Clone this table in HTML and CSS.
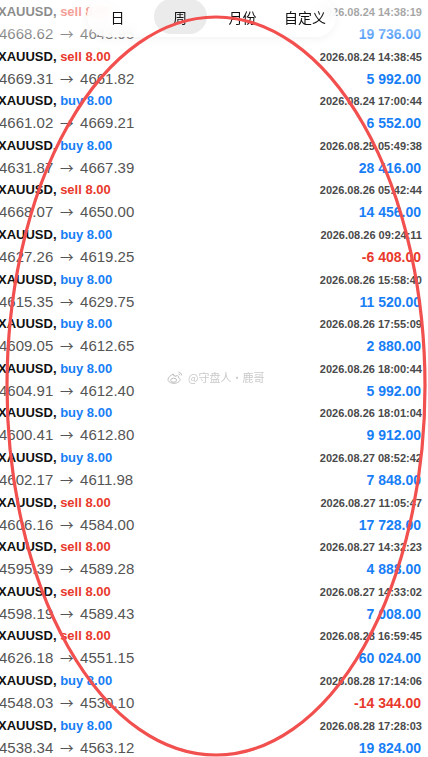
FILE: index.html
```html
<!DOCTYPE html>
<html lang="zh">
<head>
  <meta charset="UTF-8">
  <meta name="viewport" content="width=device-width, initial-scale=1.0">
  <title>交易记录</title>
  <link rel="stylesheet" href="styles.css">
</head>
<body>
  <div class="screen">
    <div class="trades">
      <div class="trade">
        <div class="line"><span class="sym">XAUUSD, <span class="sell">sell 8.00</span></span><span class="time">2026.08.24 14:38:19</span></div>
        <div class="line"><span class="px">4668.62 <i>→</i> 4643.95</span><span class="pnl">19 736.00</span></div>
      </div>
      <div class="trade">
        <div class="line"><span class="sym">XAUUSD, <span class="sell">sell 8.00</span></span><span class="time">2026.08.24 14:38:45</span></div>
        <div class="line"><span class="px">4669.31 <i>→</i> 4661.82</span><span class="pnl">5 992.00</span></div>
      </div>
      <div class="trade">
        <div class="line"><span class="sym">XAUUSD, <span class="buy">buy 8.00</span></span><span class="time">2026.08.24 17:00:44</span></div>
        <div class="line"><span class="px">4661.02 <i>→</i> 4669.21</span><span class="pnl">6 552.00</span></div>
      </div>
      <div class="trade">
        <div class="line"><span class="sym">XAUUSD, <span class="buy">buy 8.00</span></span><span class="time">2026.08.25 05:49:38</span></div>
        <div class="line"><span class="px">4631.87 <i>→</i> 4667.39</span><span class="pnl">28 416.00</span></div>
      </div>
      <div class="trade">
        <div class="line"><span class="sym">XAUUSD, <span class="sell">sell 8.00</span></span><span class="time">2026.08.26 05:42:44</span></div>
        <div class="line"><span class="px">4668.07 <i>→</i> 4650.00</span><span class="pnl">14 456.00</span></div>
      </div>
      <div class="trade">
        <div class="line"><span class="sym">XAUUSD, <span class="buy">buy 8.00</span></span><span class="time">2026.08.26 09:24:11</span></div>
        <div class="line"><span class="px">4627.26 <i>→</i> 4619.25</span><span class="pnl loss">-6 408.00</span></div>
      </div>
      <div class="trade">
        <div class="line"><span class="sym">XAUUSD, <span class="buy">buy 8.00</span></span><span class="time">2026.08.26 15:58:40</span></div>
        <div class="line"><span class="px">4615.35 <i>→</i> 4629.75</span><span class="pnl">11 520.00</span></div>
      </div>
      <div class="trade">
        <div class="line"><span class="sym">XAUUSD, <span class="buy">buy 8.00</span></span><span class="time">2026.08.26 17:55:09</span></div>
        <div class="line"><span class="px">4609.05 <i>→</i> 4612.65</span><span class="pnl">2 880.00</span></div>
      </div>
      <div class="trade">
        <div class="line"><span class="sym">XAUUSD, <span class="buy">buy 8.00</span></span><span class="time">2026.08.26 18:00:44</span></div>
        <div class="line"><span class="px">4604.91 <i>→</i> 4612.40</span><span class="pnl">5 992.00</span></div>
      </div>
      <div class="trade">
        <div class="line"><span class="sym">XAUUSD, <span class="buy">buy 8.00</span></span><span class="time">2026.08.26 18:01:04</span></div>
        <div class="line"><span class="px">4600.41 <i>→</i> 4612.80</span><span class="pnl">9 912.00</span></div>
      </div>
      <div class="trade">
        <div class="line"><span class="sym">XAUUSD, <span class="buy">buy 8.00</span></span><span class="time">2026.08.27 08:52:42</span></div>
        <div class="line"><span class="px">4602.17 <i>→</i> 4611.98</span><span class="pnl">7 848.00</span></div>
      </div>
      <div class="trade">
        <div class="line"><span class="sym">XAUUSD, <span class="sell">sell 8.00</span></span><span class="time">2026.08.27 11:05:47</span></div>
        <div class="line"><span class="px">4606.16 <i>→</i> 4584.00</span><span class="pnl">17 728.00</span></div>
      </div>
      <div class="trade">
        <div class="line"><span class="sym">XAUUSD, <span class="sell">sell 8.00</span></span><span class="time">2026.08.27 14:32:23</span></div>
        <div class="line"><span class="px">4595.39 <i>→</i> 4589.28</span><span class="pnl">4 888.00</span></div>
      </div>
      <div class="trade">
        <div class="line"><span class="sym">XAUUSD, <span class="sell">sell 8.00</span></span><span class="time">2026.08.27 14:33:02</span></div>
        <div class="line"><span class="px">4598.19 <i>→</i> 4589.43</span><span class="pnl">7 008.00</span></div>
      </div>
      <div class="trade">
        <div class="line"><span class="sym">XAUUSD, <span class="sell">sell 8.00</span></span><span class="time">2026.08.28 16:59:45</span></div>
        <div class="line"><span class="px">4626.18 <i>→</i> 4551.15</span><span class="pnl">60 024.00</span></div>
      </div>
      <div class="trade">
        <div class="line"><span class="sym">XAUUSD, <span class="buy">buy 8.00</span></span><span class="time">2026.08.28 17:14:06</span></div>
        <div class="line"><span class="px">4548.03 <i>→</i> 4530.10</span><span class="pnl loss">-14 344.00</span></div>
      </div>
      <div class="trade">
        <div class="line"><span class="sym">XAUUSD, <span class="buy">buy 8.00</span></span><span class="time">2026.08.28 17:28:03</span></div>
        <div class="line"><span class="px">4538.34 <i>→</i> 4563.12</span><span class="pnl">19 824.00</span></div>
      </div>
    </div>

    <div class="fade"></div>

    <div class="tabs">
      <span class="tab">日</span>
      <span class="tab active">周</span>
      <span class="tab">月份</span>
      <span class="tab">自定义</span>
    </div>

    <div class="watermark">
      <svg width="16" height="13" viewBox="0 0 16 13" fill="none" stroke="#bdbdbd" stroke-width="1">
        <path d="M6.5 3.2C3.6 4 1 6.4 1 8.6 1 10.9 4 12.3 7 12.3c3.4 0 6.1-1.8 6.1-3.8 0-1.1-1-1.6-1.8-1.8.5-1.2.1-2-1.1-2-.8 0-1.7.4-2.3.8.3-1-.2-1.4-1.4-.9z"/>
        <ellipse cx="6.6" cy="9.2" rx="3" ry="2"/>
        <path d="M11.5 1.2c1.8 0 3.2 1.4 3.2 3.2M11.6 2.9c.8 0 1.4.6 1.4 1.4"/>
      </svg>
      <span>@守盘人·鹿哥</span>
    </div>

    <svg class="circle" width="428" height="757" viewBox="0 0 428 757">
      <ellipse cx="216" cy="386" rx="209" ry="369" fill="none" stroke="#f24f4f" stroke-width="3.2"/>
    </svg>
  </div>
</body>
</html>
```

FILE: styles.css
```css
body {
  margin: 0;
  background: #fff;
  font-family: "Liberation Sans", Arial, "Noto Sans CJK SC", sans-serif;
  overflow: hidden;
}

.screen {
  position: relative;
  width: 428px;
  height: 757px;
  overflow: hidden;
}

.trades {
  padding: 2px 6px 0 0;
}

.trade {
  height: 44.6px;
}

.line {
  display: flex;
  justify-content: space-between;
  align-items: baseline;
}

.line:first-child {
  height: 20px;
  line-height: 20px;
}

.line:last-child {
  height: 24.6px;
  line-height: 24.6px;
}

.sym {
  margin-left: -2px;
  font-size: 13px;
  font-weight: bold;
  color: #111;
}

.sell {
  color: #e8392c;
}

.buy {
  color: #177ef6;
}

.px {
  margin-left: -1px;
  font-size: 15px;
  color: #555;
}

.px i {
  font-style: normal;
  font-family: "Noto Sans CJK SC", sans-serif;
  font-size: 13.5px;
  line-height: 1;
  margin: 0 2.5px;
}

.time {
  font-size: 11px;
  font-weight: bold;
  color: #4a4a4a;
}

.pnl {
  margin-right: 1px;
  font-size: 14px;
  font-weight: bold;
  color: #177ef6;
}

.pnl.loss {
  color: #e8392c;
}

/* top bar overlays */
.fade {
  position: absolute;
  left: 0;
  top: 0;
  width: 100%;
  height: 48px;
  background: linear-gradient(rgba(255, 255, 255, 0.55), rgba(255, 255, 255, 0.45) 30px, rgba(255, 255, 255, 0));
}

.tabs {
  position: absolute;
  left: 87px;
  top: -4px;
  display: flex;
  gap: 9.5px;
  padding: 3px 4px;
  border-radius: 22px;
  background: rgba(255, 255, 255, 0.8);
  backdrop-filter: blur(6px);
  box-shadow: 0 2px 10px rgba(0, 0, 0, 0.05);
  font-family: "Noto Sans CJK SC", sans-serif;
}

.tab {
  width: 53px;
  height: 35px;
  line-height: 37px;
  text-align: center;
  font-size: 14px;
  color: #111;
  border-radius: 18px;
}

.tab.active {
  background: #ebebeb;
}

.watermark {
  position: absolute;
  left: 167px;
  top: 369px;
  display: flex;
  align-items: center;
  gap: 5px;
  font-family: "Noto Sans CJK SC", sans-serif;
  font-size: 11px;
  color: #cacaca;
  filter: blur(0.7px);
}

.circle {
  position: absolute;
  left: 0;
  top: 0;
}
```
